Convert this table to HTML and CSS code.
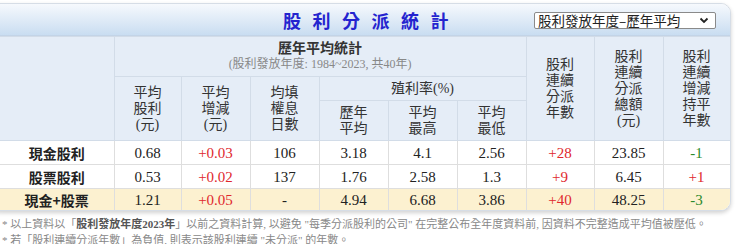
FILE: index.html
```html
<!DOCTYPE html>
<html lang="zh-Hant">
<head>
<meta charset="utf-8">
<link rel="stylesheet" href="styles.css">
</head>
<body>
<div class="panel">
  <div class="titlebar">
    <div class="title">股利分派統計</div>
    <div class="picker">
      <span class="picker-text">股利發放年度–歷年平均</span>
      <svg class="chev" width="10" height="7" viewBox="0 0 10 7"><path d="M1.5 1.5 L5 5 L8.5 1.5" fill="none" stroke="#222" stroke-width="1.8"/></svg>
    </div>
  </div>
  <table class="grid">
    <colgroup>
      <col class="c-label"><col class="c67"><col class="c69"><col class="c69"><col class="c69"><col class="c69"><col class="c69"><col class="c68"><col class="c69"><col class="c67">
    </colgroup>
    <thead>
      <tr class="h1">
        <th rowspan="3" class="corner"></th>
        <th colspan="6" class="group"><div class="group-title">歷年平均統計</div><div class="group-sub">(股利發放年度: 1984~2023, 共40年)</div></th>
        <th rowspan="3">股利<br>連續<br>分派<br>年數</th>
        <th rowspan="3">股利<br>連續<br>分派<br>總額<br>(元)</th>
        <th rowspan="3">股利<br>連續<br>增減<br>持平<br>年數</th>
      </tr>
      <tr class="h2">
        <th rowspan="2">平均<br>股利<br>(元)</th>
        <th rowspan="2">平均<br>增減<br>(元)</th>
        <th rowspan="2">均填<br>權息<br>日數</th>
        <th colspan="3">殖利率(%)</th>
      </tr>
      <tr class="h3">
        <th>歷年<br>平均</th>
        <th>平均<br>最高</th>
        <th>平均<br>最低</th>
      </tr>
    </thead>
    <tbody>
      <tr>
        <td class="label">現金股利</td><td>0.68</td><td class="up">+0.03</td><td>106</td><td>3.18</td><td>4.1</td><td>2.56</td><td class="up">+28</td><td>23.85</td><td class="down">-1</td>
      </tr>
      <tr>
        <td class="label">股票股利</td><td>0.53</td><td class="up">+0.02</td><td>137</td><td>1.76</td><td>2.58</td><td>1.3</td><td class="up">+9</td><td>6.45</td><td class="up">+1</td>
      </tr>
      <tr class="total">
        <td class="label">現金+股票</td><td>1.21</td><td class="up">+0.05</td><td>-</td><td>4.94</td><td>6.68</td><td>3.86</td><td class="up">+40</td><td>48.25</td><td class="down">-3</td>
      </tr>
    </tbody>
  </table>
</div>
<div class="notes">
  <p>* 以上資料以「<b>股利發放年度2023年</b>」以前之資料計算, 以避免 "每季分派股利的公司" 在完整公布全年度資料前, 因資料不完整造成平均值被壓低。</p>
  <p>* 若「股利連續分派年數」為負值, 則表示該股利連續 "未分派" 的年數。</p>
</div>
</body>
</html>
```

FILE: styles.css
```css
html, body {
  margin: 0;
  padding: 0;
  background: #ffffff;
}
body {
  font-family: "Liberation Serif", "Noto Sans CJK TC", serif;
  color: #222;
  width: 740px;
  height: 244px;
  overflow: hidden;
}
.panel {
  margin: 3px 0 0 -11px;
  width: 742px;
  box-sizing: border-box;
  border: 1px solid #d6dde6;
  border-radius: 10px;
  overflow: hidden;
  box-shadow: 0 2px 4px rgba(0, 0, 0, 0.18);
  background: #fff;
}
.titlebar {
  height: 31px;
  display: flex;
  align-items: center;
  justify-content: center;
  position: relative;
  background: linear-gradient(#f6f9fd, #c9ddf1);
  border-bottom: 1px solid #c3d4e7;
}
.title {
  font-family: "Noto Sans CJK TC", sans-serif;
  font-size: 18px;
  font-weight: bold;
  color: #2424cf;
  letter-spacing: 11.5px;
  margin-left: 23px;
  line-height: 20px;
}
.picker {
  position: absolute;
  left: 544px;
  top: 8px;
  width: 171px;
  height: 15px;
  border: 1px solid #8a8a8a;
  border-radius: 2px;
  background: #fff;
  display: flex;
  align-items: center;
  justify-content: space-between;
  padding: 0 6px 0 3px;
}
.picker-text {
  font-family: "Noto Sans CJK TC", sans-serif;
  font-size: 13.5px;
  line-height: 15px;
  color: #222;
}
.grid {
  border-collapse: collapse;
  table-layout: fixed;
  width: 740px;
}
.c-label { width: 124px; }
.c67 { width: 67px; }
.c68 { width: 68px; }
.c69 { width: 69px; }
th {
  background: #e5edf7;
  border: 1px solid #d2dce8;
  font-family: "Liberation Serif", "Noto Sans CJK TC", serif;
  font-weight: normal;
  font-size: 14px;
  line-height: 16px;
  color: #333;
  padding: 0;
  vertical-align: middle;
}
th.corner {
  border-left: none;
}
tr.h1 { height: 40px; }
tr.h2 { height: 24px; }
tr.h3 { height: 40px; }
.group-title {
  font-weight: bold;
  font-size: 14px;
  line-height: 16px;
  color: #333;
}
.group-sub {
  font-size: 12px;
  line-height: 15px;
  color: #888;
}
td {
  border: 1px solid #dedede;
  text-align: center;
  font-size: 15px;
  line-height: 18px;
  height: 23px;
  padding: 0;
  color: #222;
}
td.label {
  font-family: "Noto Sans CJK TC", sans-serif;
  font-weight: bold;
  font-size: 14px;
  padding-left: 10px;
  border-left: none;
}
tr.total td {
  background: #fcf1d0;
  height: 21px;
  border-bottom: none;
}
td.up { color: #e0282d; }
td.down { color: #2a8a2a; }
.notes {
  margin-top: 5px;
  padding-left: 2px;
  font-size: 11px;
  line-height: 16px;
  color: #888;
}
.notes p {
  margin: 0;
  white-space: nowrap;
}
.notes b {
  color: #555;
}
```
